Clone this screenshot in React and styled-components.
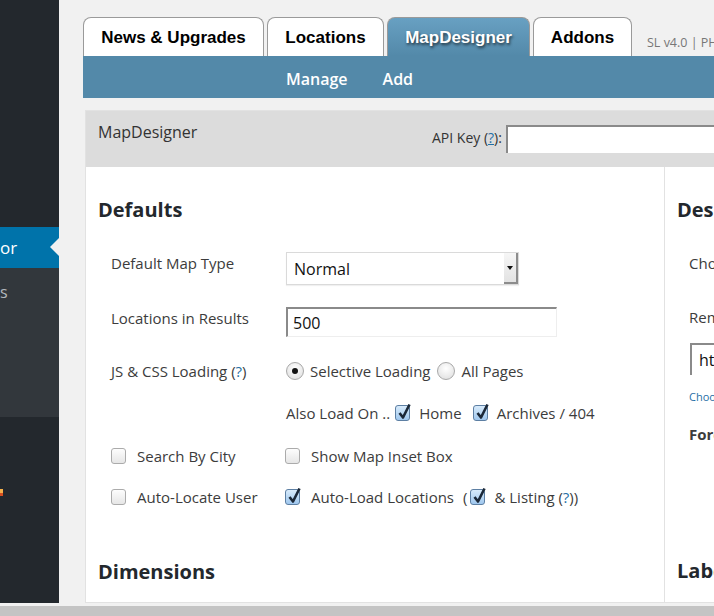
import styled, { createGlobalStyle } from "styled-components"

const Global = createGlobalStyle`
  html, body { margin: 0; padding: 0; background: #f1f1f1; }
  body { font-family: "Open Sans", "DejaVu Sans", sans-serif; color: #3c3c3c; }
`

//styles
const Shell = styled.div`
  width: 714px;
  height: 616px;
  display: flex;
  flex-direction: column;
  overflow: hidden;
`

const Screen = styled.div`
  height: 603px;
  display: flex;
  flex-direction: row;
  overflow: hidden;
`

const Scrollbar = styled.div`
  height: 10px;
  margin-top: 3px;
  background: #c4c4c4;
`

const Sidebar = styled.div`
  width: 59px;
  flex: 0 0 59px;
  background: #23282d;
  display: flex;
  flex-direction: column;
  padding-top: 227px;
  box-sizing: border-box;
`

const ActiveItem = styled.div`
  height: 41px;
  background: #0073aa;
  color: #fff;
  font-size: 17px;
  display: flex;
  align-items: center;
  position: relative;
  &:after {
    content: "";
    position: absolute;
    right: 0;
    top: 11px;
    border: 9px solid transparent;
    border-right-color: #f1f1f1;
  }
`

const SubMenu = styled.div`
  height: 149px;
  background: #32373c;
  color: #b4b9be;
  font-size: 16px;
  padding-top: 13px;
  box-sizing: border-box;
`

const Badge = styled.div`
  margin-top: 72px;
  width: 3px;
  height: 7px;
  background: linear-gradient(#f5b14b 60%, #d54e21 60%);
`

const Main = styled.div`
  flex: 1;
  padding: 17px 0 0 24px;
  overflow: hidden;
  display: flex;
  flex-direction: column;
`

const TabRow = styled.div`
  display: flex;
  gap: 3px;
  height: 39px;
`

const Tab = styled.div`
  box-sizing: border-box;
  flex: 0 0 ${p => p.$w}px;
  border: 1px solid #9a9a9a;
  border-bottom: none;
  border-radius: 8px 8px 0 0;
  background: ${p => (p.$active ? "linear-gradient(#68a0c2, #5389a9)" : "#fff")};
  color: ${p => (p.$active ? "#fff" : "#000")};
  text-shadow: ${p => (p.$active ? "1px 2px 3px rgba(0,0,0,0.65)" : "none")};
  font-family: "Liberation Sans", Arial, sans-serif;
  font-weight: bold;
  font-size: 17px;
  display: flex;
  justify-content: center;
  padding-top: 10px;
`

const Version = styled.div`
  align-self: flex-end;
  margin-left: 12px;
  padding-bottom: 5px;
  font-size: 12.5px;
  color: #777;
  white-space: nowrap;
`

const SubBar = styled.div`
  height: 42px;
  box-sizing: border-box;
  padding: 4px 0 0 203px;
  background: #5389a9;
  display: flex;
  align-items: center;
  gap: 35px;
  color: #fff;
  font-size: 16px;
  font-weight: 600;
`

const Panel = styled.div`
  margin: 12px 0 0 2px;
  flex: 1;
  border: 1px solid #e2e2e2;
  border-right: none;
  background: #fff;
  display: flex;
  flex-direction: column;
`

const PanelHead = styled.div`
  height: 56px;
  background: #dcdcdc;
  display: flex;
  align-items: flex-start;
  padding-left: 12px;
`

const PanelTitle = styled.div`
  flex: 0 0 334px;
  font-size: 16px;
  color: #333;
  padding-top: 10px;
`

const KeyLabel = styled.div`
  font-size: 14px;
  color: #333;
  padding-top: 17px;
  margin-right: 4px;
  white-space: nowrap;
`

const Help = styled.span`
  color: #1f6fa6;
  text-decoration: ${p => (p.$plain ? "none" : "underline")};
`

const KeyInput = styled.div`
  flex: 0 0 240px;
  height: 28px;
  margin-top: 14px;
  box-sizing: border-box;
  background: #fff;
  border-top: 2px solid #8a8a8a;
  border-left: 2px solid #8a8a8a;
`

const Columns = styled.div`
  flex: 1;
  display: flex;
`

const LeftCol = styled.div`
  flex: 0 0 579px;
  border-right: 1px solid #e2e2e2;
  padding: 31px 0 0 12px;
  box-sizing: border-box;
`

const RightCol = styled.div`
  flex: 1;
  padding: 31px 0 0 12px;
  white-space: nowrap;
  overflow: hidden;
`

const Heading = styled.h3`
  margin: ${p => p.$mt || 0}px 0 0 0;
  font-size: 20px;
  font-weight: bold;
  color: #23282d;
  line-height: 24px;
`

const Row = styled.div`
  display: flex;
  align-items: ${p => p.$align || "flex-start"};
  margin-top: ${p => p.$mt}px;
  padding-left: 13px;
  min-height: 20px;
`

const Label = styled.div`
  flex: 0 0 175px;
  font-size: 15px;
  color: #3c3c3c;
  padding-top: ${p => p.$pt || 0}px;
`

const Controls = styled.div`
  display: flex;
  align-items: center;
  font-size: 15px;
  color: #3c3c3c;
  white-space: nowrap;
`

const Select = styled.div`
  width: 233px;
  height: 33px;
  box-sizing: border-box;
  border: 1px solid #dadada;
  box-shadow: 0 1px 1px rgba(0,0,0,0.06);
  display: flex;
  align-items: center;
  justify-content: space-between;
  padding-left: 7px;
  font-size: 16px;
  color: #111;
`

const SelectButton = styled.div`
  width: 14px;
  height: 31px;
  box-sizing: border-box;
  background: linear-gradient(#f6f6f6, #e2e2e2);
  border-right: 2px solid #8c8c8c;
  border-bottom: 2px solid #8c8c8c;
  display: flex;
  align-items: center;
  justify-content: center;
  &:after {
    content: "";
    border: 3px solid transparent;
    border-top: 4px solid #111;
    margin-top: 4px;
  }
`

const TextInput = styled.div`
  width: 271px;
  height: 30px;
  box-sizing: border-box;
  border-top: 2px solid #8a8a8a;
  border-left: 2px solid #8a8a8a;
  border-right: 1px solid #eee;
  border-bottom: 1px solid #eee;
  display: flex;
  align-items: center;
  padding-left: 5px;
  font-size: 16px;
  color: #111;
`

const Radio = styled.span`
  width: 18px;
  height: 18px;
  box-sizing: border-box;
  border-radius: 50%;
  border: 1px solid #a8a8a8;
  background: radial-gradient(circle at 50% 35%, #ffffff, #dcdcdc);
  display: inline-flex;
  align-items: center;
  justify-content: center;
  margin: 0 6px 0 ${p => p.$ml || 0}px;
  &:after {
    content: "";
    width: 6px;
    height: 6px;
    border-radius: 50%;
    background: ${p => (p.$on ? "#111" : "transparent")};
  }
`

const Box = styled.span`
  position: relative;
  width: 15px;
  height: 16px;
  box-sizing: border-box;
  border-radius: 3px;
  border: 1px solid ${p => (p.$on ? "#5d7fa3" : "#ababab")};
  background: ${p => (p.$on ? "linear-gradient(#d8ebfb, #9fc7ee)" : "linear-gradient(#fdfdfd, #e6e6e6)")};
  display: inline-block;
  flex: 0 0 15px;
  margin: 0 ${p => p.$mr || 11}px 0 ${p => p.$ml || 0}px;
  svg {
    position: absolute;
    left: 1px;
    top: -3px;
  }
`

const Paren = styled.span`
  margin: 0 3px 0 9px;
`

const Option = styled.div`
  display: flex;
  align-items: center;
  width: ${p => p.$w}px;
  font-size: 15px;
  color: #3c3c3c;
  white-space: nowrap;
`

const SideLine = styled.div`
  font-size: ${p => p.$size || 15}px;
  font-weight: ${p => (p.$bold ? "bold" : "normal")};
  color: ${p => p.$color || "#3c3c3c"};
  margin-top: ${p => p.$mt}px;
  padding-left: 12px;
`

const SideInput = styled.div`
  margin: 16px 0 0 13px;
  height: 32px;
  box-sizing: border-box;
  border-top: 2px solid #8a8a8a;
  border-left: 2px solid #8a8a8a;
  padding: 4px 0 0 7px;
  font-size: 16px;
  color: #111;
`

function Check({ on, ml, mr }) {
  return (
    <Box $on={on} $ml={ml} $mr={mr}>
      {on && (
        <svg width="15" height="17" viewBox="0 0 15 17">
          <path d="M2.5 10 L6 14.5 L12.5 1.5" fill="none" stroke="#1b2838" strokeWidth="2.6" strokeLinejoin="round" />
        </svg>
      )}
    </Box>
  )
}

export default function App() {
  return (
    <>
      <Global />
      <Shell>
        <Screen>
          <Sidebar>
            <ActiveItem>or</ActiveItem>
            <SubMenu>s</SubMenu>
            <Badge />
          </Sidebar>

          <Main>
            <TabRow>
              <Tab $w={181}>News &amp; Upgrades</Tab>
              <Tab $w={117}>Locations</Tab>
              <Tab $w={143} $active>MapDesigner</Tab>
              <Tab $w={99}>Addons</Tab>
              <Version>SL v4.0 | PHP 5.6</Version>
            </TabRow>
            <SubBar>
              <span>Manage</span>
              <span>Add</span>
            </SubBar>

            <Panel>
              <PanelHead>
                <PanelTitle>MapDesigner</PanelTitle>
                <KeyLabel>API Key (<Help>?</Help>):</KeyLabel>
                <KeyInput />
              </PanelHead>

              <Columns>
                {/* Defaults column */}
                <LeftCol>
                  <Heading>Defaults</Heading>

                  <Row $mt={30}>
                    <Label $pt={1}>Default Map Type</Label>
                    <Select>
                      Normal
                      <SelectButton />
                    </Select>
                  </Row>

                  <Row $mt={22}>
                    <Label $pt={1}>Locations in Results</Label>
                    <TextInput>500</TextInput>
                  </Row>

                  <Row $mt={24} $align="center">
                    <Label>JS &amp; CSS Loading (<Help $plain>?</Help>)</Label>
                    <Controls>
                      <Radio $on />
                      Selective Loading
                      <Radio $ml={7} />
                      All Pages
                    </Controls>
                  </Row>

                  <Row $mt={22} $align="center">
                    <Label />
                    <Controls>
                      Also Load On ..
                      <Check on ml={5} mr={9} />
                      Home
                      <Check on ml={11} mr={9} />
                      Archives / 404
                    </Controls>
                  </Row>

                  <Row $mt={23} $align="center">
                    <Option $w={174}><Check />Search By City</Option>
                    <Option><Check />Show Map Inset Box</Option>
                  </Row>

                  <Row $mt={21} $align="center">
                    <Option $w={174}><Check />Auto-Locate User</Option>
                    <Option>
                      <Check on />Auto-Load Locations
                      <Paren>(</Paren>
                      <Check on mr={9} />&amp; Listing (<Help $plain>?</Help>))
                    </Option>
                  </Row>

                  <Heading $mt={53}>Dimensions</Heading>
                </LeftCol>

                {/* Design column */}
                <RightCol>
                  <Heading>Design</Heading>
                  <SideLine $mt={31}>Choose Theme</SideLine>
                  <SideLine $mt={34}>Remove Credits</SideLine>
                  <SideInput>http://</SideInput>
                  <SideLine $mt={14} $size={11} $color="#1f6fa6">Choose</SideLine>
                  <SideLine $mt={20} $bold>Force</SideLine>
                  <Heading $mt={115}>Labels</Heading>
                </RightCol>
              </Columns>
            </Panel>
          </Main>
        </Screen>
        <Scrollbar />
      </Shell>
    </>
  )
}
